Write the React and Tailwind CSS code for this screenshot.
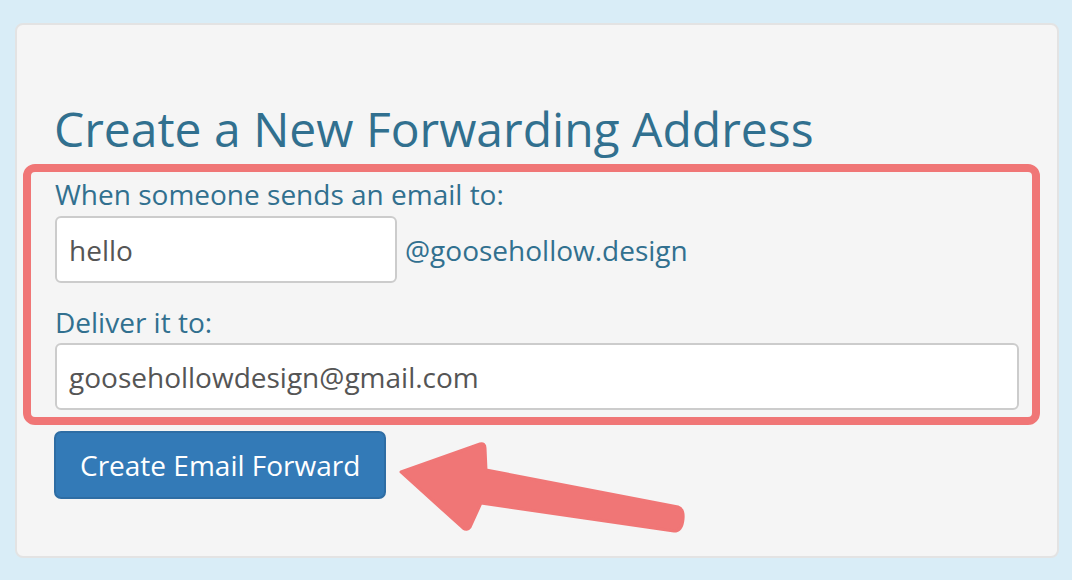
import React from 'react';

const font = { fontFamily: '"Open Sans", "Liberation Sans", sans-serif' };

const Arrow = () => (
  <svg className="absolute left-0 top-0 pointer-events-none" width="1072" height="580" viewBox="0 0 1072 580">
    <path
      d="M401 472 L480 444 Q485 443 485 448 L486 470 L678 507 Q684 509 683 519 Q682 531 674 531 L481 503 L470 527 Q467 531 463 528 Z"
      fill="#f07676"
      stroke="#f07676"
      strokeWidth="3"
      strokeLinejoin="round"
    />
  </svg>
);

const App = () => {
  return (
    <div className="relative w-[1072px] h-[580px] bg-[#d9edf7] pt-[23px] pl-[15px]" style={font}>
      <div className="w-[1044px] h-[535px] bg-[#f5f5f5] border-2 border-[#e3e3e3] rounded-lg pt-[77px] pl-[37px] pr-[38px]">
        <h3 className="text-[48px] leading-[53px] text-[#31708f] font-normal">Create a New Forwarding Address</h3>

        <div className="mt-[9px] ml-[-31px] mr-[-21px] border-[8px] border-[#f07676] rounded-[12px] pl-[24px] pr-[13px] pt-[2px] pb-[7px]">
          <label className="block text-[28px] leading-[40px] text-[#31708f]">When someone sends an email to:</label>
          <div className="mt-[2px] flex items-center gap-[8px]">
            <div className="w-[342px] h-[67px] bg-white border-2 border-[#cccccc] rounded-[6px] pl-[12px] flex items-center text-[28px] text-[#555555]">
              hello
            </div>
            <span className="text-[28px] text-[#31708f]">@goosehollow.design</span>
          </div>

          <label className="block mt-[19px] text-[28px] leading-[40px] text-[#31708f]">Deliver it to:</label>
          <div className="mt-[1px] w-full h-[67px] bg-white border-2 border-[#cccccc] rounded-[6px] pl-[12px] flex items-center text-[28px] text-[#555555]">
            goosehollowdesign@gmail.com
          </div>
        </div>

        <button className="mt-[6px] h-[68px] px-[24px] bg-[#337ab7] border-2 border-[#2e6da4] rounded-[7px] text-[28px] text-white">
          Create Email Forward
        </button>
      </div>
      <Arrow />
    </div>
  );
};

export default App;
